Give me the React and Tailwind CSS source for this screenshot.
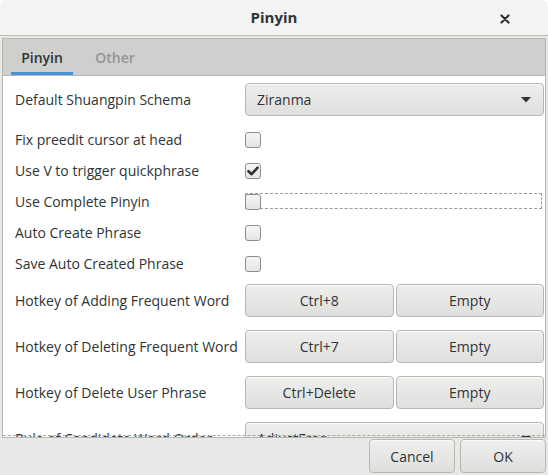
import React from "react";

const font = { fontFamily: '"Open Sans", "Noto Sans", sans-serif' };

function Checkbox({ checked, focus }) {
  return (
    <div className="relative flex h-full items-center">
      {focus && (
        <div className="absolute left-0 top-[7px] h-[16px] w-[297px] border border-dashed border-[#9a9a9a]" />
      )}
      <div className="relative flex h-[16px] w-[16px] items-center justify-center rounded-[3px] border border-[#8b8e8f] bg-gradient-to-b from-[#f6f6f6] to-[#e4e4e4]">
        {checked && (
          <svg width="12" height="12" viewBox="0 0 12 12">
            <path d="M1.5 6.2 L4.6 9.2 L10.6 2.6" fill="none" stroke="#2e3436" strokeWidth="2.6" strokeLinecap="round" strokeLinejoin="round" />
          </svg>
        )}
      </div>
    </div>
  );
}

function Button({ children, className = "" }) {
  return (
    <div
      className={
        "flex h-[33px] items-center justify-center rounded-[4px] border border-[#b6b6b3] bg-gradient-to-b from-[#eeeeec] to-[#dfdfdd] text-[14px] text-[#2e3436] shadow-[inset_0_1px_0_rgba(255,255,255,0.8)] " +
        className
      }
    >
      {children}
    </div>
  );
}

function Combo({ value }) {
  return (
    <div className="flex h-[33px] w-[299px] items-center justify-between rounded-[4px] border border-[#b6b6b3] bg-gradient-to-b from-[#eeeeec] to-[#dfdfdd] pl-[11px] pr-[12px] text-[14px] text-[#2e3436] shadow-[inset_0_1px_0_rgba(255,255,255,0.8)]">
      <span>{value}</span>
      <svg width="10" height="6" viewBox="0 0 10 6">
        <path d="M0 0 L10 0 L5 5.5 Z" fill="#2e3436" />
      </svg>
    </div>
  );
}

function Row({ label, children, h, mt = "" }) {
  return (
    <div className={"flex shrink-0 items-center " + h + " " + mt}>
      <div className="w-[230px] shrink-0 text-[14px] text-[#2e3436]">{label}</div>
      <div className="flex h-full flex-1 items-center">{children}</div>
    </div>
  );
}

export default function App() {
  return (
    <div className="h-[475px] w-[548px] overflow-hidden bg-white" style={font}>
      <div className="flex h-full flex-col overflow-hidden rounded-t-[8px] bg-[#e8e8e7]">
        {/* title bar */}
        <div className="relative flex h-[36px] shrink-0 items-center justify-center border-b border-[#bdbdbb] bg-[#f3f3f2]">
          <span className="text-[15px] font-bold text-[#2e3436]">Pinyin</span>
          <svg className="absolute left-[500px] top-[14px]" width="10" height="10" viewBox="0 0 10 10">
            <path d="M1.5 1.5 L8.5 8.5 M8.5 1.5 L1.5 8.5" stroke="#2e3436" strokeWidth="2.2" strokeLinecap="round" />
          </svg>
        </div>
        {/* notebook */}
        <div className="relative mx-[2px] mt-[2px] flex h-[400px] shrink-0 flex-col overflow-hidden border border-[#b6b6b3] bg-white">
          <div className="flex h-[37px] shrink-0 items-end border-b border-[#b6b6b3] bg-[#cfcfcd] pl-[8px]">
            <div className="flex h-full w-[62px] flex-col items-center justify-center border-b-[3px] border-[#4a90d9] pt-[3px] text-[14px] font-semibold text-[#2e3436]">
              Pinyin
            </div>
            <div className="flex h-full w-[84px] items-center justify-center text-[14px] font-semibold text-[#929595]">
              Other
            </div>
          </div>
          <div className="flex min-h-0 flex-1 flex-col overflow-hidden pl-[12px] pt-[7px]">
            <Row label="Default Shuangpin Schema" h="h-[33px]">
              <Combo value="Ziranma" />
            </Row>
            <Row label="Fix preedit cursor at head" h="h-[31px]" mt="mt-[8px]">
              <Checkbox />
            </Row>
            <Row label="Use V to trigger quickphrase" h="h-[31px]">
              <Checkbox checked />
            </Row>
            <Row label="Use Complete Pinyin" h="h-[31px]">
              <Checkbox focus />
            </Row>
            <Row label="Auto Create Phrase" h="h-[31px]">
              <Checkbox />
            </Row>
            <Row label="Save Auto Created Phrase" h="h-[31px]">
              <Checkbox />
            </Row>
            <Row label="Hotkey of Adding Frequent Word" h="h-[33px]" mt="mt-[5px]">
              <div className="flex w-[299px] gap-[2px]">
                <Button className="flex-1">Ctrl+8</Button>
                <Button className="flex-1">Empty</Button>
              </div>
            </Row>
            <Row label="Hotkey of Deleting Frequent Word" h="h-[33px]" mt="mt-[13px]">
              <div className="flex w-[299px] gap-[2px]">
                <Button className="flex-1">Ctrl+7</Button>
                <Button className="flex-1">Empty</Button>
              </div>
            </Row>
            <Row label="Hotkey of Delete User Phrase" h="h-[33px]" mt="mt-[13px]">
              <div className="flex w-[299px] gap-[2px]">
                <Button className="flex-1">Ctrl+Delete</Button>
                <Button className="flex-1">Empty</Button>
              </div>
            </Row>
            <Row label="Rule of Candidate Word Order" h="h-[33px]" mt="mt-[13px]">
              <Combo value="AdjustFreq" />
            </Row>
          </div>
          <div className="absolute bottom-[1px] left-0 right-0 border-t border-dashed border-[#a8a8a8]" />
        </div>
        {/* buttons */}
        <div className="flex justify-end gap-[5px] pr-[2px] pt-[1px]">
          <Button className="h-[34px] w-[86px]">Cancel</Button>
          <Button className="h-[34px] w-[86px]">OK</Button>
        </div>
      </div>
    </div>
  );
}
